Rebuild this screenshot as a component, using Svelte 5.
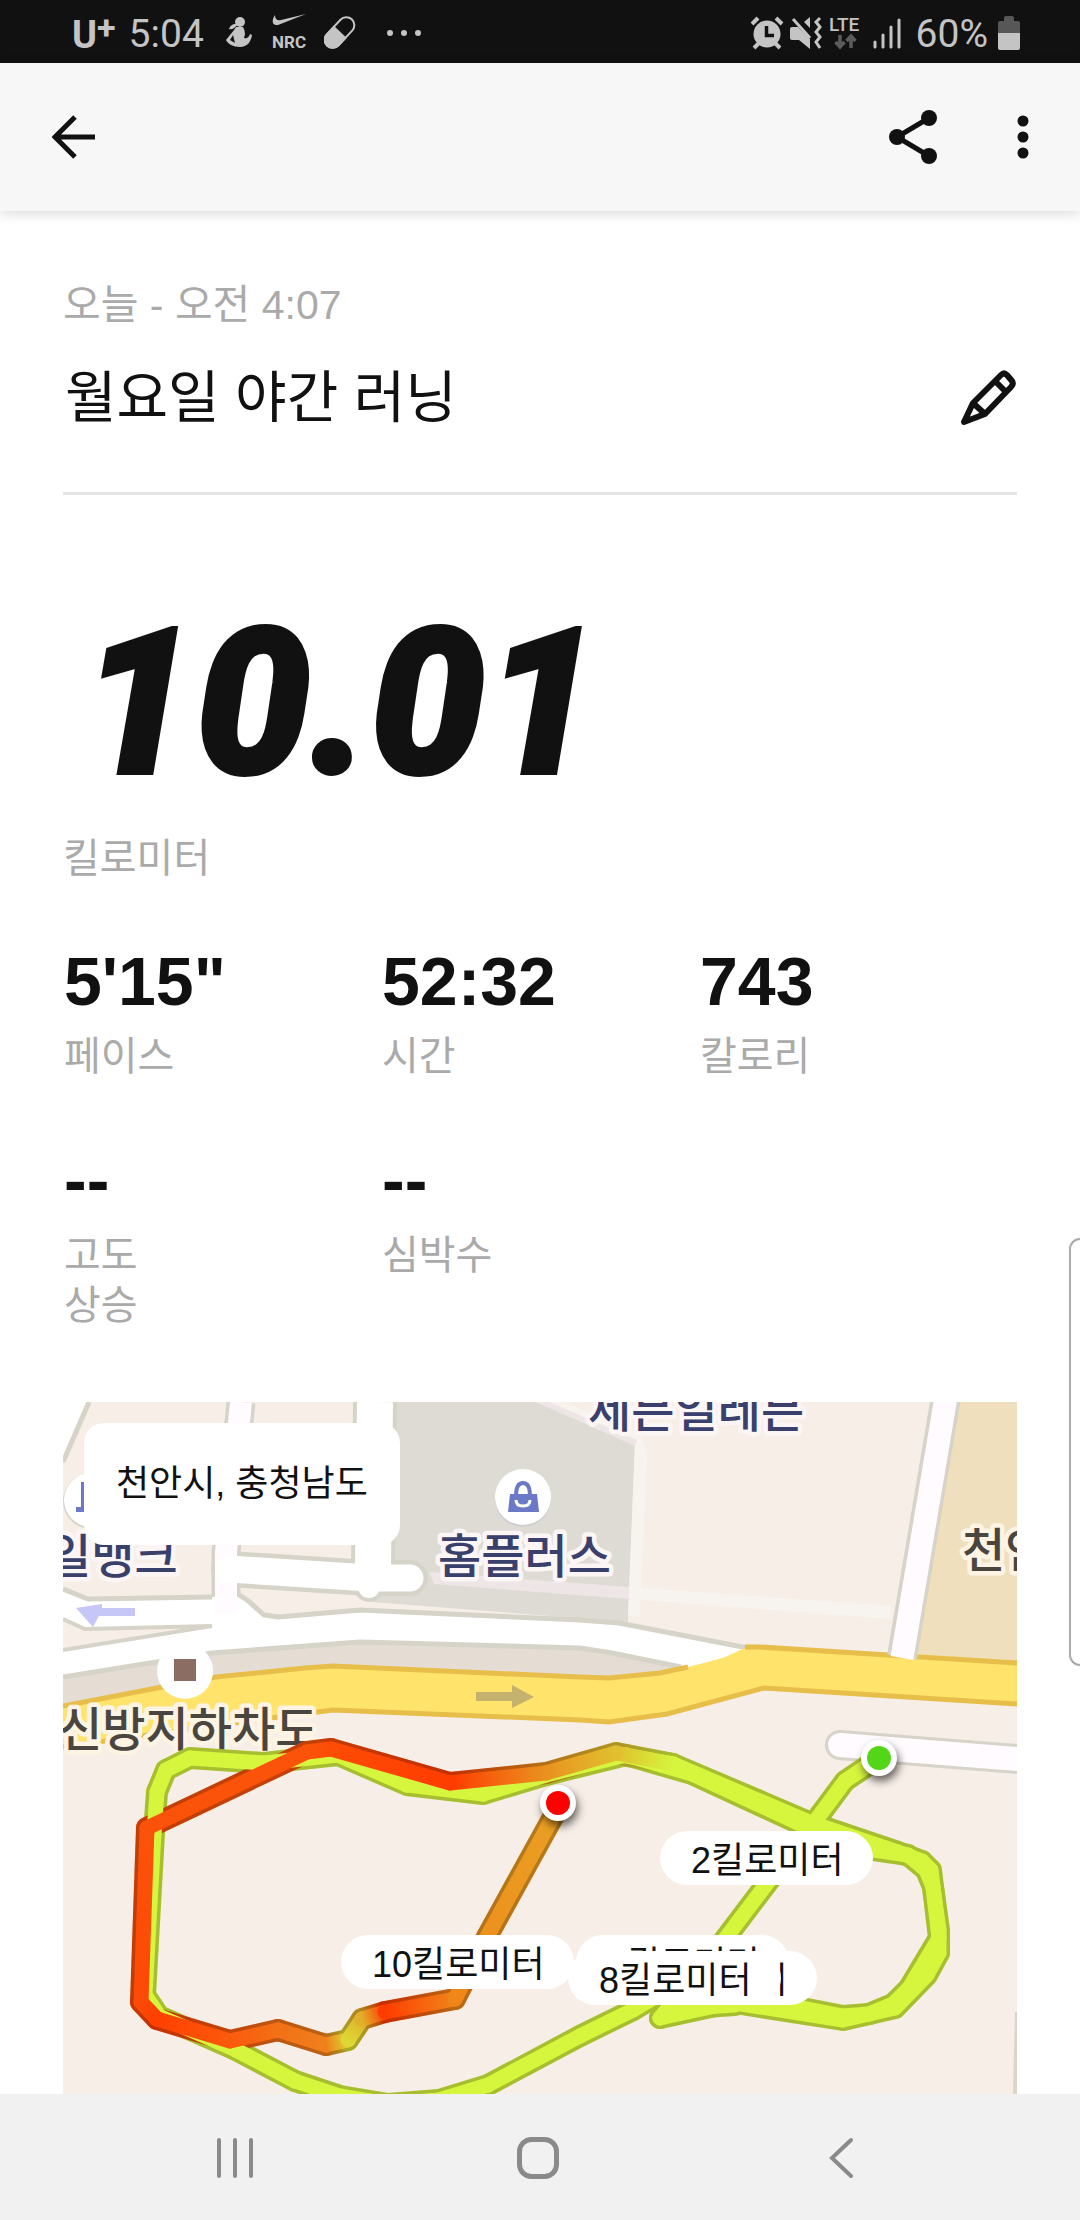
<script lang="ts">
	interface Stat {
		value: string;
		label: string;
	}

	interface PathPoint {
		x: number;
		y: number;
		color: string;
	}

	const MAP_WIDTH = 954;
	const MAP_HEIGHT = 692;
	const EASY = '#d6f53d';

	const run = {
		date: '오늘 - 오전 4:07',
		title: '월요일 야간 러닝',
		distance: '10.01',
		place: '천안시, 충청남도'
	};

	const stats: Stat[] = [
		{ value: '5\'15"', label: '페이스' },
		{ value: '52:32', label: '시간' },
		{ value: '743', label: '칼로리' },
		{ value: '--', label: '고도 상승' },
		{ value: '--', label: '심박수' }
	];

	// Later markers are drawn over earlier ones
	const kmMarkers = [
		{ label: '10킬로미터', x: 278, y: 533 },
		{ label: '1킬로미터', x: 513, y: 533 },
		{ label: '9킬로미터', x: 541, y: 549 },
		{ label: '8킬로미터', x: 505, y: 549 },
		{ label: '2킬로미터', x: 597, y: 429 }
	];

	function track(coords: number[][], color = EASY): PathPoint[] {
		return coords.map(([x, y]) => ({ x, y, color }));
	}

	// Point colours follow the pace: green is slow, red is fast
	const laps: PathPoint[][] = [
		track([[816, 356], [782, 379], [759, 410], [702, 484], [640, 566], [597, 616], [625, 606], [672, 603]]),
		track([[597, 616], [680, 598], [739, 606], [780, 614], [806, 612], [830, 602], [846, 586], [876, 536], [868, 468], [859, 459], [835, 450], [746, 420], [610, 362], [558, 353]]),
		track([[672, 601], [780, 618], [832, 606], [864, 573], [876, 551], [876, 528], [870, 485], [863, 468], [845, 453], [811, 448], [735, 421], [629, 372], [563, 353], [483, 373], [420, 392], [344, 383], [275, 353], [201, 361], [127, 356], [103, 368], [94, 390], [91, 431], [82, 593], [96, 614], [173, 648], [232, 679], [277, 694], [325, 702], [376, 698], [425, 683], [517, 634], [570, 608], [640, 566]]),
		[
			{ x: 610, y: 362, color: EASY },
			{ x: 553, y: 351, color: '#e0c02e' },
			{ x: 483, y: 371, color: '#e9921f' },
			{ x: 387, y: 381, color: '#ff3c00' },
			{ x: 268, y: 347, color: '#fd4c06' },
			{ x: 244, y: 350, color: '#fb540a' },
			{ x: 84, y: 426, color: '#fb520a' },
			{ x: 78, y: 600, color: '#fd4a06' },
			{ x: 94, y: 617, color: '#ff4000' },
			{ x: 167, y: 639, color: '#fb5a0c' },
			{ x: 215, y: 628, color: '#f27016' },
			{ x: 263, y: 643, color: '#f0801c' },
			{ x: 285, y: 638, color: '#dcd733' },
			{ x: 299, y: 617, color: '#e0b02b' },
			{ x: 322, y: 610, color: '#ff3c00' },
			{ x: 392, y: 597, color: '#f0851a' },
			{ x: 425, y: 533, color: '#ec921e' },
			{ x: 495, y: 406, color: '#e9a023' }
		]
	];

	const segments = laps.flatMap((lap, l) =>
		lap.slice(1).map((to, i) => ({ id: `seg-${l}-${i}`, from: lap[i], to }))
	);

	function stroke(seg: { id: string; from: PathPoint; to: PathPoint }) {
		return seg.from.color === seg.to.color ? seg.from.color : `url(#${seg.id})`;
	}
</script>

<div class="screen">
	<div class="status-bar">
		<div class="status-group">
			<span class="carrier">U<sup>+</sup></span>
			<span class="clock">5:04</span>
			<svg class="yoga" width="26" height="32" viewBox="0 0 26 32" fill="currentColor" aria-hidden="true">
				<circle cx="14" cy="5" r="5" />
				<path d="M10 7c-4 0-6 2-7 5 3 1 6-1 8-4z" />
				<path d="M10 10h7q2 3 2 7l-1 4c3 1 5-1 6-4l2 1c-1 7-5 12-12 12C7 30 2 27 0 23l8-10zM7 18l-3 5 5 3z" fill-rule="evenodd" />
			</svg>
			<svg class="nrc" width="36" height="38" viewBox="0 0 36 38" fill="currentColor" aria-hidden="true">
				<path d="M3 1C0 5-1 12 6 11L34 0 9 6C5 7 3 5 3 1z" />
				<text x="0" y="34" font-size="17" font-weight="700">NRC</text>
			</svg>
			<svg class="capsule" width="32" height="34" viewBox="0 0 32 34" fill="none" stroke="currentColor" stroke-width="2" aria-hidden="true">
				<rect x="-8" y="-18" width="16" height="36" rx="8" transform="translate(15.500 16.500) rotate(43)" />
				<path d="M-8 0H8v10a8 8 0 0 1-16 0z" fill="currentColor" transform="translate(15.500 16.500) rotate(43)" />
			</svg>
			<svg class="more" width="36" height="8" viewBox="0 0 36 8" fill="currentColor" aria-hidden="true">
				<circle cx="4" cy="4" r="3" />
				<circle cx="18" cy="4" r="3" />
				<circle cx="32" cy="4" r="3" />
			</svg>
		</div>
		<div class="status-group right">
			<svg width="34" height="34" viewBox="0 0 34 34" fill="none" stroke="currentColor" stroke-width="4" aria-hidden="true">
				<circle cx="17" cy="18" r="13.500" fill="currentColor" stroke="none" />
				<path d="M2 8l6-6M32 8l-6-6M9 27l-5 5M25 27l5 5" />
				<path d="M16.500 10v9.500H24" stroke="#111" stroke-width="3.500" />
			</svg>
			<svg width="32" height="34" viewBox="0 0 32 34" fill="none" stroke="currentColor" aria-hidden="true">
				<path d="M0 13q0-2 2-2h6l12 12v10L9 24H2q-2 0-2-2zM14 6l6-5v11z" fill="currentColor" stroke="none" />
				<path d="M3 3l17 19" stroke-width="3" />
				<path d="M30 2l-4 4 4 5-4 5 4 5-4 5 4 6" stroke-width="3" />
			</svg>
			<svg width="36" height="34" viewBox="0 0 36 34" aria-hidden="true">
				<text x="1" y="15" font-size="19" font-weight="500" fill="currentColor">LTE</text>
				<path d="M12 19v11M7.500 26l4.500 5 4.500-5M23 32V21M18.500 25l4.500-5 4.500 5" fill="none" stroke="#5c5c5c" stroke-width="3.500" />
			</svg>
			<svg class="signal" width="30" height="34" viewBox="0 0 30 34" stroke="currentColor" stroke-width="3" stroke-linecap="round" aria-hidden="true">
				<path d="M3 26v5M11 19v12M19 11v20M27 4v27" />
			</svg>
			<span class="battery-text">60%</span>
			<svg width="22" height="34" viewBox="0 0 22 34" aria-hidden="true">
				<path d="M0 17V7q0-2 2-2h4V2q0-2 2-2h6q2 0 2 2v3h4q2 0 2 2v10z" fill="#575757" />
				<path d="M0 17h22v15q0 2-2 2H2q-2 0-2-2z" fill="currentColor" />
			</svg>
		</div>
	</div>

	<header class="app-bar">
		<button class="icon-button" aria-label="뒤로">
			<svg width="44" height="44" viewBox="0 0 44 44" fill="none" stroke="currentColor" stroke-width="5" aria-hidden="true">
				<path d="M23 2L3 22l20 20M4 22h39" />
			</svg>
		</button>
		<div class="actions">
			<button class="icon-button" aria-label="공유">
				<svg width="48" height="54" viewBox="0 0 48 54" fill="currentColor" aria-hidden="true">
					<path d="M40 8L8 27l32 19" fill="none" stroke="currentColor" stroke-width="5" />
					<circle cx="40" cy="8" r="8" />
					<circle cx="8" cy="27" r="8" />
					<circle cx="40" cy="46" r="8" />
				</svg>
			</button>
			<button class="icon-button" aria-label="더보기">
				<svg width="12" height="44" viewBox="0 0 12 44" fill="currentColor" aria-hidden="true">
					<circle cx="6" cy="6" r="5.500" />
					<circle cx="6" cy="22" r="5.500" />
					<circle cx="6" cy="38" r="5.500" />
				</svg>
			</button>
		</div>
	</header>

	<main>
		<p class="date">{run.date}</p>
		<div class="title-row">
			<h1>{run.title}</h1>
			<button class="icon-button" aria-label="제목 수정">
				<svg width="58" height="58" viewBox="0 0 58 58" fill="none" stroke="currentColor" stroke-width="6" stroke-linejoin="round" aria-hidden="true">
					<path d="M5 53l9-19L42 6q3-3 6 0l5 6q2 3-1 6L26 45zM14 34l12 11M36 12l11 11" />
				</svg>
			</button>
		</div>

		<section class="distance">
			<strong>{run.distance}</strong>
			<span class="label">킬로미터</span>
		</section>

		<dl class="stats">
			{#each stats as stat}
				<div class="stat">
					<dd>{stat.value}</dd>
					<dt class="label">{stat.label}</dt>
				</div>
			{/each}
		</dl>

		<section class="map">
			<svg viewBox="0 0 {MAP_WIDTH} {MAP_HEIGHT}" aria-hidden="true">
				<defs>
					{#each segments as seg (seg.id)}
						<linearGradient id={seg.id} gradientUnits="userSpaceOnUse" x1={seg.from.x} y1={seg.from.y} x2={seg.to.x} y2={seg.to.y}>
							<stop offset="0" stop-color={seg.from.color} />
							<stop offset="1" stop-color={seg.to.color} />
						</linearGradient>
					{/each}
				</defs>

				<rect width={MAP_WIDTH} height={MAP_HEIGHT} fill="#f7eee7" />

				<!-- areas -->
				<path d="M332 0H473L572 41 565 220 309 200z" fill="#dedbd5" />
				<path d="M482 0h20l76 32 6 20-7 163-12-1 7-173z" fill="#f7f3ee" />
				<path d="M473 0h14l87 38-2 6z" fill="#eee6e6" />
				<path d="M366 170l200 15v12l-195-15z" fill="#eee6e6" />
				<path d="M566 185l262 19v13l-262-20z" fill="#f7f3ee" />
				<path d="M896 0h58v260l-102-8z" fill="#efdfbd" />
				<path d="M0 272L149 248 297 238 517 244 625 264 517 285 270 275 0 310z" fill="#e5ddd4" />

				<!-- side streets -->
				<path d="M0 0h25L0 60z" fill="#fff" />
				<path d="M26 0L0 60" stroke="#d6d3c8" stroke-width="5" />
				<g fill="none" stroke-linejoin="round">
					<path d="M178 0L163 150v45" stroke="#d6d3c8" stroke-width="29" />
					<path d="M312 0l-2 165" stroke="#d6d3c8" stroke-width="44" />
					<path d="M166 167l140 9h41" stroke="#d6d3c8" stroke-width="36" stroke-linecap="round" />
					<circle cx="306" cy="185" r="15" fill="#d6d3c8" />
				</g>
				<path d="M0 187L25 197 149 195 173 193 184 198 201 213 215 215 297 208 517 218 556 221 690 247 625 266 549 251 517 246 297 240 149 251 0 275z" fill="#fff" />
				<path d="M0 187L25 197 149 195M173 191L184 198 201 213 215 215 297 208 517 218 556 221 690 247M618 265L549 251 517 246 297 240 149 251 0 275" fill="none" stroke="#d6d3c8" stroke-width="5" />
				<g fill="none" stroke-linejoin="round">
					<path d="M178 0L163 150v62" stroke="#fffbff" stroke-width="22" />
					<path d="M312 0l-2 165" stroke="#fff" stroke-width="36" />
					<path d="M166 167l140 9h41" stroke="#fff" stroke-width="27" stroke-linecap="round" />
					<circle cx="306" cy="185" r="11" fill="#fff" />
				</g>
				<path d="M0 217l22 10 127-3L0 248" fill="#f7eee7" stroke="#d6d3c8" stroke-width="4" />

				<!-- main road -->
				<path d="M0 304L94 286 153 275 242 266 270 264 517 275 546 276 597 271 625 265 660 256 684 245H697L825 253 954 261V302L701 286 604 312 546 320 517 318 270 308 163 322 0 345z" fill="#ffe36b" />
				<path d="M0 304L94 286 153 275 242 266 270 264 517 275 546 276 597 271 625 265M682 245H697L825 253 954 261M954 302L701 286 604 312 546 320 517 318 270 308 163 322 0 345" fill="none" stroke="#e7be4a" stroke-width="5" />
				<path d="M883-5L839 255" stroke="#d6d3c8" stroke-width="30" />
				<path d="M883-5L839 256" stroke="#fffbff" stroke-width="23" />
				<path d="M777 343l190 15" stroke="#d6d3c8" stroke-width="30" stroke-linecap="round" />
				<path d="M777 343l190 15" stroke="#fffbff" stroke-width="24" stroke-linecap="round" />
				<path d="M954 610l-2 82" stroke="#d9d5c9" stroke-width="4" />

				<path d="M13 206l26-4v4h33v8H36l-6 11z" fill="#c6c6f7" />
				<path d="M413 290h36v-7l22 12-22 11v-7h-36z" fill="#c6b26f" />

				<!-- places -->
				<circle cx="28" cy="99" r="28" fill="#d6d3c8" />
				<circle cx="28" cy="98" r="27" fill="#fff" />
				<path d="M18 80h5v30H13v-5h5z" fill="#6b79c6" />
				<circle cx="460" cy="97" r="28" fill="#cfcdd0" />
				<circle cx="460" cy="95" r="28" fill="#fff" />
				<path d="M447 92h27l2 18h-31z" fill="#6b79c6" />
				<path d="M453 94q0-13 7-13t7 13" fill="none" stroke="#6b79c6" stroke-width="4" />
				<path d="M453 98q0 6 7 6t7-6" fill="none" stroke="#fff" stroke-width="3" />
				<circle cx="122" cy="269" r="28" fill="#fff" />
				<path d="M111 257h22v22h-22z" fill="#8c6d63" />
				<g class="place-names">
					<text x="525" y="25">세븐일레븐</text>
					<text x="375" y="171">홈플러스</text>
					<text x="-15" y="171">일뱅크</text>
					<text x="-4" y="344" class="street">신방지하차도</text>
					<text x="899" y="165" class="street">천안</text>
				</g>

				<!-- route -->
				<g stroke-width="22" stroke-linecap="round">
					{#each segments as seg (seg.id)}
						<line x1={seg.from.x} y1={seg.from.y} x2={seg.to.x} y2={seg.to.y} stroke={stroke(seg)} />
					{/each}
				</g>
				<g class="casing-shade">
					{#each laps as lap}
						<polyline points={lap.map((p) => `${p.x},${p.y}`).join(' ')} />
					{/each}
				</g>
				<g stroke-width="15" stroke-linecap="round">
					{#each segments as seg (seg.id)}
						<line x1={seg.from.x} y1={seg.from.y} x2={seg.to.x} y2={seg.to.y} stroke={stroke(seg)} />
					{/each}
				</g>

				<g class="endpoint">
					<circle cx="816" cy="356" r="18" />
					<circle cx="816" cy="356" r="12" fill="#53d617" />
				</g>
				<g class="endpoint">
					<circle cx="495" cy="401" r="18" />
					<circle cx="495" cy="401" r="12" fill="#f00" />
				</g>
			</svg>

			{#each kmMarkers as marker}
				<span class="km" style="left: {(marker.x / MAP_WIDTH) * 100}%; top: {(marker.y / MAP_HEIGHT) * 100}%">
					{marker.label}
				</span>
			{/each}
			<p class="place">{run.place}</p>
		</section>
	</main>

	<div class="edge-handle"></div>

	<nav class="nav-bar">
		<button class="icon-button" aria-label="최근 앱">
			<svg width="40" height="42" viewBox="0 0 40 42" fill="none" stroke="currentColor" stroke-width="4" stroke-linecap="round" aria-hidden="true">
				<path d="M4 3v36M20 3v36M36 3v36" />
			</svg>
		</button>
		<button class="icon-button" aria-label="홈">
			<svg width="42" height="42" viewBox="0 0 42 42" fill="none" stroke="currentColor" stroke-width="5" aria-hidden="true">
				<rect x="2.500" y="2.500" width="37" height="37" rx="12" />
			</svg>
		</button>
		<button class="icon-button" aria-label="뒤로 가기">
			<svg width="26" height="42" viewBox="0 0 26 42" fill="none" stroke="currentColor" stroke-width="4" stroke-linecap="round" aria-hidden="true">
				<path d="M23 3L4 21l19 18" />
			</svg>
		</button>
	</nav>
</div>

<style>
	:global(body) {
		background: #fff;
	}

	.screen {
		display: flex;
		flex-direction: column;
		min-height: 100vh;
		color: #111;
		font-family: 'Liberation Sans', 'Noto Sans CJK KR', sans-serif;
	}

	p,
	h1,
	dl,
	dd {
		margin: 0;
	}

	svg {
		display: block;
	}

	.icon-button {
		display: flex;
		padding: 0;
		border: 0;
		background: none;
		color: inherit;
		cursor: pointer;
	}

	.status-bar {
		display: flex;
		justify-content: space-between;
		align-items: center;
		box-sizing: border-box;
		height: 63px;
		padding: 2px 60px 0 72px;
		background: #111;
		color: #c4c4c4;
		font-family: Roboto, sans-serif;
		font-size: 39px;
		line-height: 58px;
	}

	.status-group {
		display: flex;
		align-items: center;
	}

	.status-group.right {
		gap: 6px;
	}

	.carrier {
		padding-top: 4px;
		font-size: 38px;
		font-weight: 700;
	}

	.carrier sup {
		font-size: 34px;
		line-height: 0;
		vertical-align: 9px;
	}

	.clock {
		margin-left: 13px;
		padding-top: 3px;
	}

	.yoga {
		margin-left: 22px;
	}

	.nrc {
		margin-left: 20px;
	}

	.capsule {
		margin-left: 16px;
	}

	.more {
		margin-left: 30px;
	}

	.signal {
		margin-left: 2px;
	}

	.battery-text {
		margin: 0 4px 0 8px;
		padding-top: 3px;
	}

	.app-bar {
		display: flex;
		justify-content: space-between;
		align-items: center;
		height: 148px;
		padding: 0 51px 0 52px;
		background: #f7f7f7;
		box-shadow: 0 2px 12px rgba(0, 0, 0, 0.16);
	}

	.actions {
		display: flex;
		align-items: center;
		gap: 80px;
	}

	main {
		flex: 1;
		padding: 66px 63px 0;
	}

	.date,
	.label {
		color: #aaa;
		font-size: 40px;
		line-height: 50px;
	}

	.date {
		font-size: 41px;
		line-height: 56px;
	}

	.title-row {
		display: flex;
		justify-content: space-between;
		align-items: center;
		padding: 29px 0 58px;
		border-bottom: 3px solid #e5e5e5;
	}

	h1 {
		padding-left: 2px;
		font-size: 56px;
		font-weight: 400;
		line-height: 72px;
	}

	.distance {
		display: flex;
		flex-direction: column;
		padding-top: 80px;
	}

	.distance strong {
		padding-left: 18px;
		font-family: Roboto, sans-serif;
		font-size: 204px;
		font-style: italic;
		font-weight: 900;
		line-height: 258px;
		-webkit-text-stroke: 4px #111;
	}

	.stats {
		display: grid;
		grid-template-columns: repeat(3, 1fr);
		row-gap: 59px;
		padding: 58px 0 72px;
	}

	.stat {
		display: flex;
		flex-direction: column;
		gap: 10px;
		padding-left: 1px;
	}

	.stat dd {
		font-size: 68px;
		font-weight: 700;
		line-height: 80px;
	}

	.stat dt {
		max-width: 120px;
	}

	.map {
		position: relative;
		overflow: hidden;
	}

	.place-names {
		fill: #39406b;
		stroke: #fbf5f5;
		stroke-width: 9px;
		stroke-linejoin: round;
		paint-order: stroke;
		font-family: 'Noto Sans CJK KR', sans-serif;
		font-size: 47px;
		font-weight: 500;
	}

	.place-names .street {
		fill: #4a453f;
		stroke: #fdf4e4;
	}

	.casing-shade {
		fill: none;
		stroke: #000;
		stroke-width: 22px;
		stroke-linecap: round;
		stroke-linejoin: round;
		opacity: 0.22;
	}

	.endpoint {
		fill: #fff;
		filter: drop-shadow(2px 5px 4px rgba(0, 0, 0, 0.6));
	}

	.km {
		position: absolute;
		padding: 5px 29px 0 31px;
		border-radius: 27px;
		background: #fff;
		font-size: 36px;
		line-height: 49px;
		white-space: nowrap;
	}

	.place {
		position: absolute;
		top: 21px;
		left: 21px;
		padding: 0 32px;
		border-radius: 20px;
		background: #fff;
		font-size: 36px;
		line-height: 122px;
	}

	.edge-handle {
		position: fixed;
		top: 1238px;
		right: 0;
		box-sizing: border-box;
		width: 11px;
		height: 428px;
		border: 2px solid #aaa;
		border-right: 0;
		border-radius: 16px 0 0 16px;
	}

	.nav-bar {
		position: sticky;
		bottom: 0;
		display: grid;
		grid-template-columns: repeat(3, 1fr);
		align-items: center;
		justify-items: center;
		height: 126px;
		padding: 2px 88px 0 84px;
		box-sizing: border-box;
		background: #f1f1f1;
		color: #8a8a8a;
	}
</style>
